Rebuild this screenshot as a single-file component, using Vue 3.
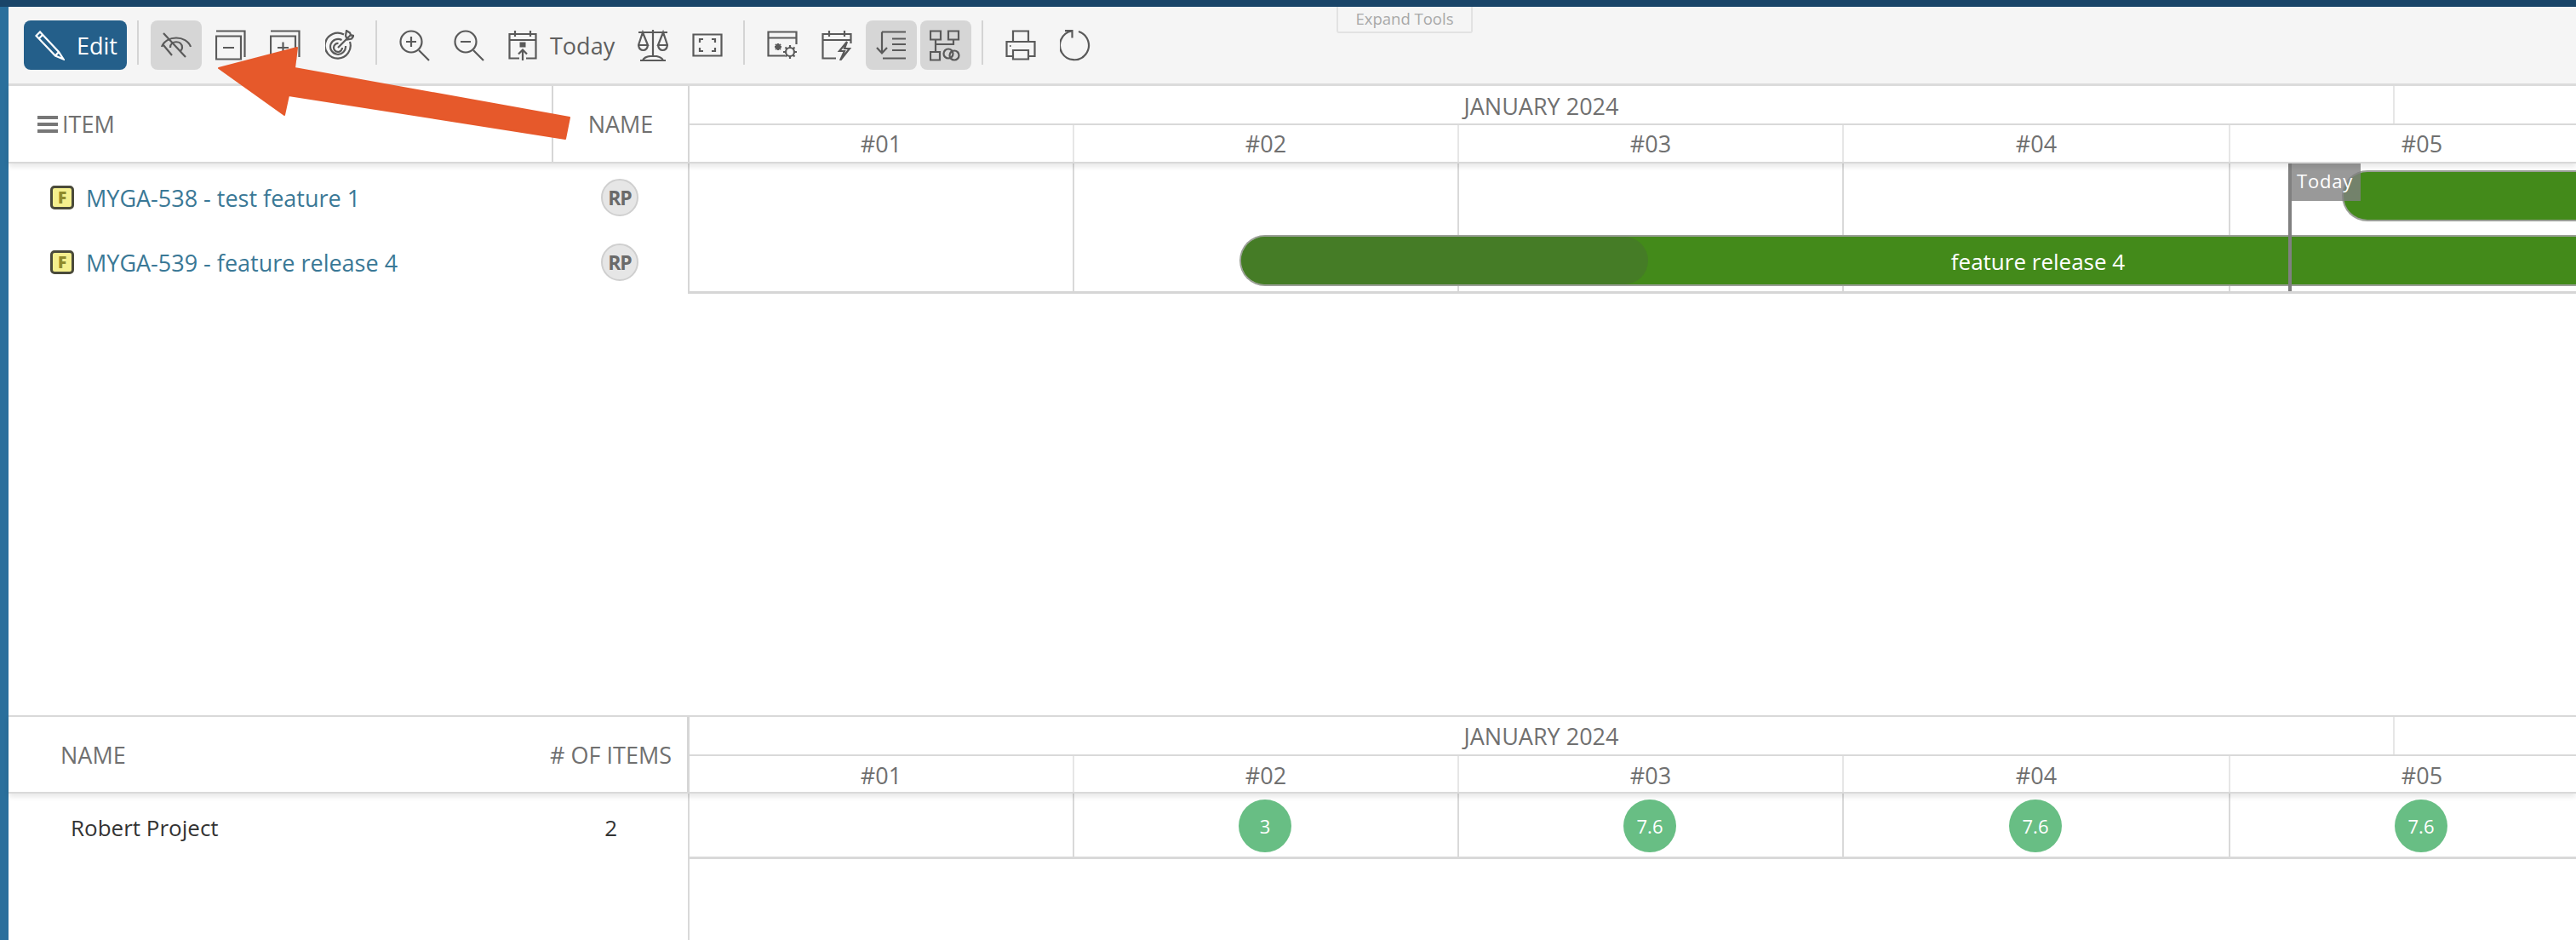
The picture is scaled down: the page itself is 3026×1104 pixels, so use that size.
<script setup>
const weeks = ['#01', '#02', '#03', '#04', '#05']
const loads = ['', '3', '7.6', '7.6', '7.6']
const rows = ['MYGA-538 - test feature 1', 'MYGA-539 - feature release 4']
</script>

<template>
  <div class="app">
    <div class="topbar"></div>
    <div class="body">
      <div class="strip"></div>
      <div class="main">
        <div class="toolbar">
          <button class="edit">
            <svg width="35" height="35" viewBox="0 0 35 35" class="white"><path d="M1.5 6 L6 1.5 L28 25 L33.5 33.5 L24 29.5 Z M4 10 L9.5 4.5 M24 29.5 L28 25"/></svg>
            <span>Edit</span>
          </button>
          <span class="sep"></span>
          <div class="tool on">
            <svg width="36" height="30" viewBox="0 0 36 30"><path d="M1 17 C6 3 30 3 35 17 M11 18 C11 9 25 9 25 18 C25 20 24 21 23 22 M3 1 L29 29 M3 15 L13 27"/></svg>
          </div>
          <div class="tool">
            <svg width="36" height="36" viewBox="0 0 36 36"><path d="M1 1.5 H34.5 V32 M1 7.5 H30 V34.5 H1 Z M9 21 H22"/></svg>
          </div>
          <div class="tool">
            <svg width="36" height="36" viewBox="0 0 36 36"><path d="M1 1.5 H34.5 V32 M1 7.5 H30 V34.5 H1 Z M9 21 H22 M15.5 14.5 V27.5"/></svg>
          </div>
          <div class="tool">
            <svg width="34" height="36" viewBox="0 0 34 36"><path d="M22 5.5 A15 15 0 1 0 29 14 M19.5 12 A9 9 0 1 0 24 19 M15 21 L30 6 M15.5 16 A5 5 0 1 0 20 21 M24 7 L25 1 L29 3.5 L30 6 L33.5 7 L31 10.5 L26 11.5 Z"/></svg>
          </div>
          <span class="sep"></span>
          <div class="tool">
            <svg width="36" height="37" viewBox="0 0 36 37"><circle cx="14" cy="14" r="12.5"/><path d="M23 24 L35 36 M8 14 H20 M14 8 V20"/></svg>
          </div>
          <div class="tool">
            <svg width="36" height="37" viewBox="0 0 36 37"><circle cx="14" cy="14" r="12.5"/><path d="M23 24 L35 36 M8 14 H20"/></svg>
          </div>
          <div class="today-tool">
            <svg width="34" height="36" viewBox="0 0 34 36"><path d="M13 33.5 H1.5 V5 H32.5 V33.5 H21 M1.5 12 H32.5 M8 1 V8 M26 1 V8 M17 36 V24 M12 28.5 L17 23.5 L22 28.5"/><rect x="14" y="15" width="6" height="5" class="solid"/></svg>
            <span>Today</span>
          </div>
          <div class="tool">
            <svg width="36" height="37" viewBox="0 0 36 37"><path d="M1 3 H35 M18 0 V32 M6 3 L1 18 H12 Z M30 3 L24 18 H35 Z M1 18 C2 26 11 26 12 18 M24 18 C25 26 34 26 35 18 M3 36 H33 M6 36 C9 29 27 29 30 36"/></svg>
          </div>
          <div class="tool">
            <svg width="36" height="28" viewBox="0 0 36 28"><path d="M1.5 1.5 H34.5 V26.5 H1.5 Z M9 11 V7 H13 M27 11 V7 H23 M9 17 V21 H13 M27 17 V21 H23"/></svg>
          </div>
          <span class="sep"></span>
          <div class="tool">
            <svg width="36" height="34" viewBox="0 0 36 34"><path d="M21 29.5 H1.5 V1.5 H34.5 V16 M1.5 8.5 H34.5 M13 15 V23 M9 19 H17 M10 16 L16 22 M16 16 L10 22"/><circle cx="27" cy="25" r="5"/><path d="M27 17 V20 M27 30 V33 M19 25 H22 M32 25 H35 M21.5 19.5 L23.5 21.5 M30.5 28.5 L32.5 30.5 M32.5 19.5 L30.5 21.5 M23.5 28.5 L21.5 30.5"/></svg>
          </div>
          <div class="tool">
            <svg width="36" height="36" viewBox="0 0 36 36"><path d="M17 33.5 H1.5 V5 H34.5 V16 M1.5 12 H34.5 M9 1 V8 M27 1 V8 M30 14 L21 25 H27 L22 36 L33 22 H27 Z"/></svg>
          </div>
          <div class="tool on">
            <svg width="36" height="34" viewBox="0 0 36 34"><path d="M7 1.5 H35 M7 1.5 V26 M1 20 L7 26.5 L13 20 M19 9.5 H35 M19 16 H35 M19 23 H35 M8 32.5 H35"/></svg>
          </div>
          <div class="tool on">
            <svg width="38" height="37" viewBox="0 0 38 37"><path d="M1 1.5 H13 V11.5 H1 Z M22 1.5 H34 V11.5 H22 Z M7 11.5 V26 M28 11.5 V17 H7 M1 26 H12 V35.5 H1 Z"/><circle cx="22" cy="28" r="5.5"/><circle cx="29" cy="30" r="5.5"/></svg>
          </div>
          <span class="sep"></span>
          <div class="tool">
            <svg width="36" height="36" viewBox="0 0 36 36"><path d="M9 14 V1.5 H27 V14 M9 31 H1.5 V14 H34.5 V31 H27 M9 24 H27 V34.5 H9 Z M5 19 H6.5"/></svg>
          </div>
          <div class="tool">
            <svg width="37" height="37" viewBox="0 0 37 37"><path d="M22 2 A17 17 0 1 1 14 1.5 M6 1.2 H14.5 V9.5"/></svg>
          </div>
          <div class="expand">Expand Tools</div>
        </div>

        <div class="header">
          <div class="left-head">
            <div class="item-head"><span class="burger"><i></i><i></i><i></i></span>ITEM</div>
            <div class="name-head">NAME</div>
          </div>
          <div class="timeline">
            <div class="months">
              <div class="month-main">JANUARY 2024</div>
              <div class="month-next"></div>
            </div>
            <div class="weeks">
              <div v-for="w in weeks" :key="w" class="week">{{ w }}</div>
            </div>
          </div>
        </div>

        <div class="content">
          <div class="left-rows">
            <div v-for="r in rows" :key="r" class="row">
              <div class="row-item">
                <span class="feature">F</span>
                <span class="link">{{ r }}</span>
              </div>
              <div class="row-name"><span class="avatar">RP</span></div>
            </div>
          </div>
          <div class="chart">
            <div v-for="w in weeks" :key="w" class="col"></div>
            <div class="bar bar-a"></div>
            <div class="bar bar-b">
              <div class="progress"></div>
              <span>feature release 4</span>
            </div>
            <div class="today-line"><div class="today-flag">Today</div></div>
          </div>
        </div>

        <div class="spacer"></div>

        <div class="lower">
          <div class="lower-head">
            <div class="lower-left-head">
              <span>NAME</span>
              <span># OF ITEMS</span>
            </div>
            <div class="timeline">
              <div class="months months-low">
                <div class="month-main">JANUARY 2024</div>
                <div class="month-next"></div>
              </div>
              <div class="weeks weeks-low">
                <div v-for="w in weeks" :key="w" class="week">{{ w }}</div>
              </div>
            </div>
          </div>
          <div class="lower-body">
            <div class="lower-left">
              <span>Robert Project</span>
              <span class="count">2</span>
            </div>
            <div class="load-area">
              <div class="loads">
                <div v-for="(l, i) in loads" :key="i" class="load">
                  <span v-if="l" class="dot">{{ l }}</span>
                </div>
              </div>
            </div>
          </div>
        </div>
      </div>
    </div>
    <svg class="arrow" width="3026" height="200" viewBox="0 0 3026 200"><path d="M257 80 L349 56 L346 80 L669 138 L664 163 L339 112 L334 135 Z" /></svg>
  </div>
</template>

<style scoped>
.app {
  position: relative;
  width: 3026px;
  height: 1104px;
  overflow: hidden;
  background: #fff;
  font-family: "Open Sans", "Noto Sans", sans-serif;
  font-size: 27px;
  color: #707070;
  display: flex;
  flex-direction: column;
}
.topbar { height: 8px; background: #1a4569; flex: none; }
.body { flex: 1; display: flex; min-height: 0; }
.strip { width: 10px; background: #2a6f9c; flex: none; }
.main { flex: 1; min-width: 0; display: flex; flex-direction: column; }

.toolbar {
  position: relative;
  flex: none;
  box-sizing: border-box;
  height: 93px;
  padding: 16px 0 0 18px;
  background: #f5f5f5;
  border-bottom: 3px solid #dcdcdc;
  display: flex;
  align-items: flex-start;
  gap: 4px;
}
.edit {
  width: 121px;
  height: 58px;
  border: none;
  border-radius: 8px;
  background: #245f8a;
  color: #fff;
  font: inherit;
  padding: 0 0 0 13px;
  display: flex;
  align-items: center;
  gap: 14px;
}
.sep {
  width: 2px;
  height: 52px;
  background: #d4d4d4;
  margin: 0 10px 0 8px;
  flex: none;
}
.tool {
  width: 60px;
  height: 58px;
  border-radius: 8px;
  display: flex;
  align-items: center;
  justify-content: center;
  flex: none;
}
.tool.on { background: #d6d6d6; }
.today-tool {
  width: 148px;
  height: 58px;
  padding-left: 12px;
  box-sizing: border-box;
  display: flex;
  align-items: center;
  gap: 15px;
  color: #5f5f5f;
  flex: none;
}
svg path, svg circle, svg rect { fill: none; stroke: #5a5a5a; stroke-width: 2.2; }
svg rect.solid { fill: #5a5a5a; stroke-width: 1; }
svg.white path { stroke: #fff; }
.expand {
  position: absolute;
  top: 0;
  left: 1560px;
  width: 160px;
  height: 31px;
  box-sizing: border-box;
  border: 2px solid #e2e2e2;
  border-top: none;
  border-radius: 0 0 3px 3px;
  font-size: 18.5px;
  line-height: 27px;
  text-align: center;
  color: #a8a8a8;
}

.header {
  flex: none;
  height: 91px;
  box-sizing: border-box;
  display: flex;
  border-bottom: 2px solid #d9d9d9;
  box-shadow: 0 4px 6px rgba(0, 0, 0, .09);
  position: relative;
  z-index: 1;
  background: #fff;
}
.left-head {
  width: 800px;
  flex: none;
  box-sizing: border-box;
  border-right: 2px solid #d6d6d6;
  display: flex;
}
.item-head {
  width: 640px;
  box-sizing: border-box;
  border-right: 2px solid #d6d6d6;
  padding-left: 34px;
  display: flex;
  align-items: center;
  gap: 5px;
}
.burger { width: 24px; display: flex; flex-direction: column; gap: 4px; }
.burger i { display: block; height: 4px; background: #777; }
.name-head { flex: 1; display: flex; align-items: center; justify-content: center; }

.timeline { flex: 1; min-width: 0; display: flex; flex-direction: column; overflow: hidden; }
.months {
  height: 46px;
  flex: none;
  box-sizing: border-box;
  display: flex;
  border-bottom: 2px solid #d9d9d9;
  line-height: 47px;
}
.month-main {
  width: 2003px;
  flex: none;
  box-sizing: border-box;
  border-right: 2px solid #e6e6e6;
  text-align: center;
}
.month-next { flex: 1; }
.weeks { flex: 1; display: flex; }
.week {
  width: 452px;
  flex: none;
  box-sizing: border-box;
  border-right: 2px solid #e6e6e6;
  text-align: center;
  line-height: 44px;
}
.week:nth-child(4) { width: 454px; }

.content { flex: none; height: 153px; display: flex; }
.left-rows {
  width: 800px;
  flex: none;
  box-sizing: border-box;
  border-right: 2px solid #d6d6d6;
  padding-top: 2px;
}
.row { height: 76px; display: flex; align-items: center; }
.row-item {
  width: 640px;
  box-sizing: border-box;
  padding-left: 49px;
  display: flex;
  align-items: center;
  gap: 14px;
}
.feature {
  width: 28px;
  height: 28px;
  box-sizing: border-box;
  border: 3px solid #4a4a3a;
  border-radius: 5px;
  background: #f5f08e;
  color: #8f8a2c;
  font-size: 19px;
  font-weight: 800;
  line-height: 22px;
  text-align: center;
}
.link { color: #3a7896; font-size: 27px; }
.row-name { flex: 1; display: flex; justify-content: center; padding-right: 2px; }
.avatar {
  width: 44px;
  height: 44px;
  box-sizing: border-box;
  border: 2px solid #cfcfcf;
  border-radius: 50%;
  background: #e6e6e6;
  color: #6a6a6a;
  font-size: 23px;
  font-weight: 700;
  letter-spacing: -1px;
  line-height: 40px;
  text-align: center;
}
.chart {
  position: relative;
  flex: 1;
  min-width: 0;
  display: flex;
  overflow: hidden;
  border-bottom: 3px solid #d6d6d6;
}
.col {
  width: 452px;
  flex: none;
  box-sizing: border-box;
  border-right: 2px solid #d9d9d9;
}
.col:nth-child(4) { width: 454px; }
.bar {
  position: absolute;
  box-sizing: border-box;
  background: #438a1a;
  border: 2px solid #9a9f96;
  border-right: none;
  overflow: hidden;
}
.bar-a { left: 1941px; top: 8px; width: 400px; height: 60px; border-radius: 30px 0 0 30px; }
.bar-b {
  left: 646px;
  top: 84px;
  width: 1878px;
  height: 60px;
  border-radius: 30px 0 0 30px;
  display: flex;
  align-items: center;
  justify-content: center;
  padding-top: 2px;
  color: #fff;
  font-size: 26px;
}
.progress {
  position: absolute;
  left: 0;
  top: 0;
  bottom: 0;
  width: 478px;
  border-radius: 30px;
  background: #457c26;
}
.bar-b span { position: relative; left: -2px; }
.today-line {
  position: absolute;
  left: 1878px;
  top: 0;
  width: 4px;
  height: 153px;
  background: #808080;
}
.today-flag {
  position: absolute;
  left: 4px;
  top: 0;
  width: 81px;
  height: 44px;
  box-sizing: border-box;
  background: rgba(128, 128, 128, .8);
  color: #fff;
  font-size: 22px;
  letter-spacing: .8px;
  line-height: 40px;
  padding-left: 6px;
}

.spacer { height: 495px; flex: none; }

.lower { flex: 1; min-height: 0; display: flex; flex-direction: column; }
.lower-head {
  flex: none;
  height: 92px;
  box-sizing: border-box;
  display: flex;
  border-top: 2px solid #d9d9d9;
  border-bottom: 2px solid #d9d9d9;
  box-shadow: 0 4px 6px rgba(0, 0, 0, .09);
  position: relative;
  z-index: 1;
  background: #fff;
}
.lower-left-head {
  width: 800px;
  flex: none;
  box-sizing: border-box;
  border-right: 3px solid #d6d6d6;
  padding: 0 18px 0 61px;
  display: flex;
  align-items: center;
  justify-content: space-between;
}
.months-low { height: 46px; line-height: 45px; }
.weeks-low .week { line-height: 46px; }
.lower-body { flex: 1; display: flex; min-height: 0; }
.lower-left {
  width: 800px;
  flex: none;
  box-sizing: border-box;
  border-right: 2px solid #d9d9d9;
  padding: 22px 0 0 73px;
  display: flex;
  align-items: flex-start;
  color: #333;
  font-size: 26px;
}
.lower-left .count { margin-left: auto; margin-right: 83px; }
.load-area { flex: 1; min-width: 0; overflow: hidden; }
.loads {
  height: 77px;
  box-sizing: border-box;
  display: flex;
  border-bottom: 3px solid #d9d9d9;
}
.load {
  width: 452px;
  flex: none;
  box-sizing: border-box;
  border-right: 2px solid #d9d9d9;
  display: flex;
  justify-content: center;
  padding: 7px 2px 0 0;
}
.load:nth-child(4) { width: 454px; }
.dot {
  width: 62px;
  height: 62px;
  border-radius: 50%;
  background: #68be84;
  color: #fff;
  font-size: 22px;
  line-height: 62px;
  text-align: center;
}
.arrow { position: absolute; left: 0; top: 0; z-index: 5; pointer-events: none; }
.arrow path { fill: #e6592b; stroke: #e6592b; stroke-width: 2; stroke-linejoin: round; }
</style>
